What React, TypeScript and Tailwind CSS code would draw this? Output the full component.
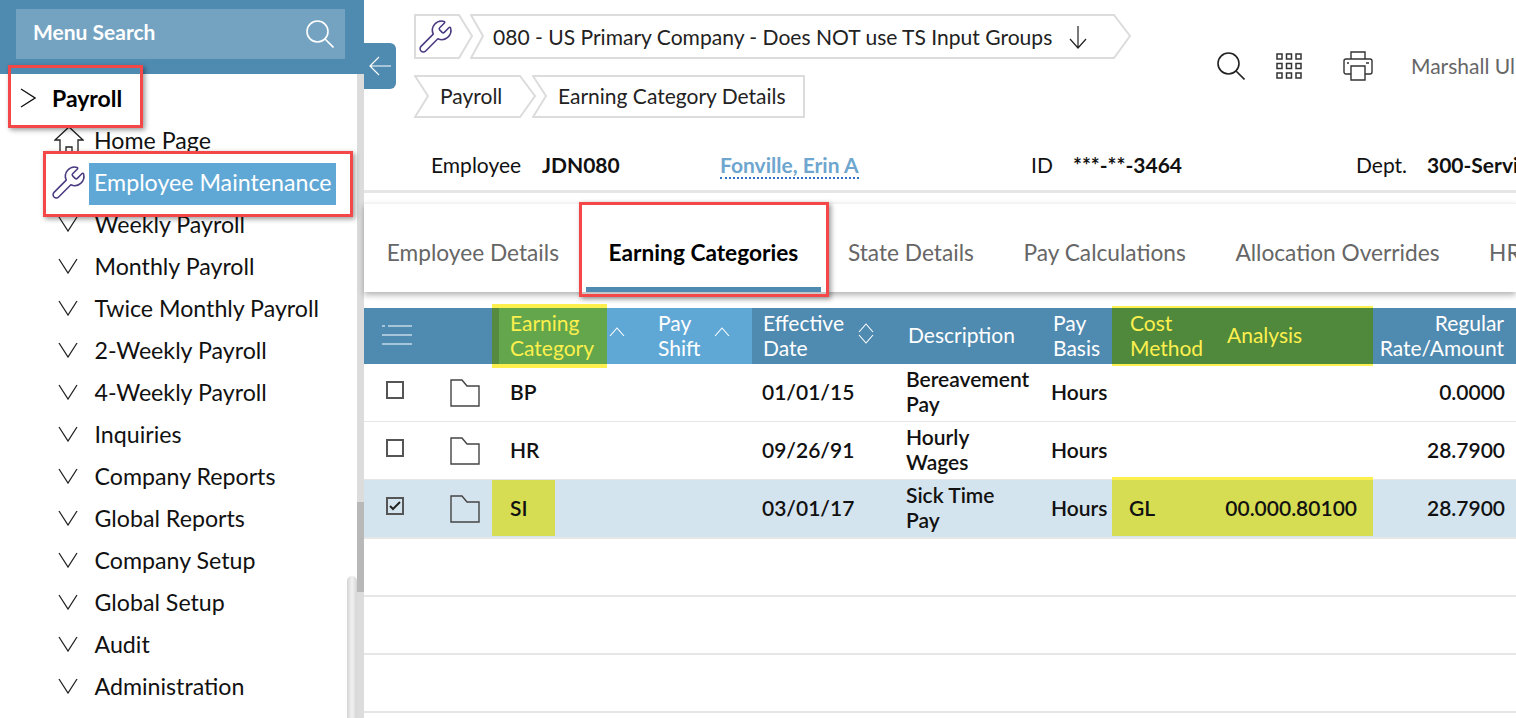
import { Wrench } from "lucide-react";
import type { ReactNode } from "react";

const menuItems = [
  "Weekly Payroll",
  "Monthly Payroll",
  "Twice Monthly Payroll",
  "2-Weekly Payroll",
  "4-Weekly Payroll",
  "Inquiries",
  "Company Reports",
  "Global Reports",
  "Company Setup",
  "Global Setup",
  "Audit",
  "Administration",
];

const tabs = ["Employee Details", "Earning Categories", "State Details", "Pay Calculations", "Allocation Overrides", "HR"];

const rows = [
  { code: "BP", date: "01/01/15", desc: ["Bereavement", "Pay"], rate: "0.0000" },
  { code: "HR", date: "09/26/91", desc: ["Hourly", "Wages"], rate: "28.7900" },
  { code: "SI", date: "03/01/17", desc: ["Sick Time", "Pay"], rate: "28.7900", selected: true },
];

const gridCols = "grid grid-cols-[128px_115px_145px_143px_145px_72px_103px_158px_143px]";

function SearchGlyph({ className }: { className?: string }) {
  return (
    <svg viewBox="0 0 28 28" fill="none" stroke="currentColor" strokeWidth="1.6" className={className}>
      <circle cx="11.5" cy="11.5" r="10.5" />
      <path d="M19 19l8.5 8.5" />
    </svg>
  );
}

function Chevron({ dir }: { dir: "down" | "right" }) {
  if (dir === "right") {
    return (
      <svg width="16" height="20" viewBox="0 0 16 20" fill="none" stroke="#111" strokeWidth="1.3" className="shrink-0">
        <path d="M1 1l14 9L1 19" />
      </svg>
    );
  }
  return (
    <svg width="20" height="16" viewBox="0 0 20 16" fill="none" stroke="#222" strokeWidth="1.3" className="shrink-0">
      <path d="M1 1l9 14 9-14" />
    </svg>
  );
}

function Crumb({ w, h, points, children, className }: { w: number; h: number; points: string; children: ReactNode; className?: string }) {
  return (
    <div className={`relative flex items-center shrink-0 ${className ?? ""}`} style={{ width: w, height: h }}>
      <svg width={w} height={h} className="absolute inset-0">
        <polygon points={points} fill="white" stroke="#dcdcdc" strokeWidth="2" />
      </svg>
      <div className="relative flex items-center whitespace-nowrap text-[21px] text-[#222]">{children}</div>
    </div>
  );
}

function SortIcon({ both }: { both?: boolean }) {
  return (
    <svg width="16" height="24" viewBox="0 0 16 24" fill="none" stroke="white" strokeWidth="1.1" className="shrink-0">
      <path d="M1 11l7-8 7 8" />
      {both && <path d="M1 14l7 8 7-8" />}
    </svg>
  );
}

function Folder() {
  return (
    <svg width="30" height="28" viewBox="0 0 30 28" fill="none" stroke="#444" strokeWidth="1.4">
      <path d="M1 1h11l5 6h12v20H1z" />
    </svg>
  );
}

function Sidebar() {
  return (
    <aside className="relative w-[364px] h-[718px] shrink-0 bg-white">
      <div className="h-[74px] bg-[#4f8ab0] pt-[9px] pl-4 pr-[19px]">
        <div className="h-[50px] bg-[#74a3c2] flex items-center justify-between pl-[17px] pr-[11px] text-white">
          <span className="text-[21px] font-bold pb-1">Menu Search</span>
          <SearchGlyph className="w-7 h-7" />
        </div>
      </div>
      <div className="flex items-center h-[45px] pt-[3px] pl-5 gap-4">
        <Chevron dir="right" />
        <span className="text-[23px] font-bold text-black">Payroll</span>
      </div>
      <div className="pl-[58px]">
        <div className="flex items-center h-[42px] -ml-1">
          <svg width="30" height="28" viewBox="0 0 30 28" fill="none" stroke="#222" strokeWidth="1.3" className="shrink-0">
            <path d="M1 14L15 1l14 13h-5v13h-6v-6h-6v6H6V14z" />
          </svg>
          <span className="ml-[10px] text-[23.2px] text-[#111]">Home Page</span>
        </div>
        <div className="flex items-center h-[42px] -ml-[7px]">
          <Wrench className="w-[37px] h-[37px] -ml-px text-[#4b3a80] shrink-0" strokeWidth={1} />
          <span className="relative top-[2px] ml-[2px] w-[247px] h-[42px] pl-[5px] pb-1 flex items-center bg-[#5fa8d6] text-white text-[23.2px] whitespace-nowrap">
            Employee Maintenance
          </span>
        </div>
        {menuItems.map((item) => (
          <div key={item} className="flex items-center h-[42px] gap-[16.5px] whitespace-nowrap">
            <Chevron dir="down" />
            <span className="text-[23.2px] text-[#111]">{item}</span>
          </div>
        ))}
      </div>
      <div className="absolute right-0 top-[74px] bottom-0 w-[7px] bg-[#dcdcdc]">
        <div className="absolute top-[428px] left-0 w-full h-[90px] bg-[#b8b8b8]" />
      </div>
      <div className="absolute right-[7px] top-[576px] bottom-0 w-[10px] rounded-t-full bg-gradient-to-r from-[#d4d4d4] via-[#f2f2f2] to-[#d4d4d4]" />
      <div className="absolute left-2 top-[65px] w-[135px] h-[63px] border-[3px] border-[#f44848] shadow-[2px_2px_5px_rgba(0,0,0,0.4)]" />
      <div className="absolute left-[43px] top-[151px] w-[310px] h-[66px] border-[3px] border-[#f44848] shadow-[2px_2px_5px_rgba(0,0,0,0.4)]" />
    </aside>
  );
}

function TopBar() {
  return (
    <div className="flex h-[124px]">
      <div className="w-[853px] shrink-0 pl-[50px] pt-[14px]">
        <div className="flex">
          <Crumb w={60} h={45} points="1,1 45,1 58,22 45,44 1,44">
            <Wrench className="ml-[3px] w-[37px] h-[37px] text-[#4b3a80]" strokeWidth={1} />
          </Crumb>
          <Crumb w={662} h={45} points="1,1 644,1 660,22 644,44 1,44 13,22" className="-ml-[4px]">
            <span className="ml-[23px] text-[21.05px]">080 - US Primary Company - Does NOT use TS Input Groups</span>
            <svg width="20" height="24" viewBox="0 0 20 24" fill="none" stroke="#222" strokeWidth="1.2" className="ml-4">
              <path d="M10 1v22M2 14l8 9 8-9" />
            </svg>
          </Crumb>
        </div>
        <div className="flex mt-4">
          <Crumb w={123} h={43} points="1,1 106,1 121,21 106,42 1,42 14,21">
            <span className="ml-[26px] pb-[2px]">Payroll</span>
          </Crumb>
          <Crumb w={274} h={43} points="1,1 272,1 272,42 1,42 14,21" className="-ml-[5px]">
            <span className="ml-[26px] pb-[2px]">Earning Category Details</span>
          </Crumb>
        </div>
      </div>
      <div className="flex items-center h-[30px] mt-[51px] whitespace-nowrap">
        <SearchGlyph className="w-7 h-7 text-[#222]" />
        <svg width="26" height="26" viewBox="0 0 26 26" fill="none" stroke="#333" strokeWidth="1.5" className="ml-[31px]">
          {[1, 10.5, 20].map((y) =>
            [1, 10.5, 20].map((x) => <rect key={`${x}-${y}`} x={x} y={y} width="5" height="5" />)
          )}
        </svg>
        <svg width="30" height="30" viewBox="0 0 30 30" fill="none" stroke="#333" strokeWidth="1.4" className="ml-[41px]">
          <path d="M8 8V1h14v7M8 23H3a2 2 0 0 1-2-2V10a2 2 0 0 1 2-2h24a2 2 0 0 1 2 2v11a2 2 0 0 1-2 2h-5" />
          <path d="M8 15h14v14H8zM4 12h2M23 12h3" />
        </svg>
        <span className="ml-[38px] text-[21px] text-[#666]">Marshall Ulrich</span>
      </div>
    </div>
  );
}

function EmployeeInfo() {
  return (
    <div className="flex items-center h-[42px] mt-5 pl-[67px] text-[21px] text-[#111] whitespace-nowrap">
      <span className="w-[111px] shrink-0">Employee</span>
      <span className="w-[178px] shrink-0 font-bold">JDN080</span>
      <span className="w-[311px] shrink-0">
        <span className="font-bold text-[#6ea6cf] border-b-2 border-dotted border-[#2f74c0]">Fonville, Erin A</span>
      </span>
      <span className="w-[42px] shrink-0">ID</span>
      <span className="w-[283px] shrink-0 font-bold">***-**-3464</span>
      <span className="w-[71px] shrink-0">Dept.</span>
      <span className="font-bold">300-Service</span>
    </div>
  );
}

function Tabs() {
  return (
    <div className="relative flex h-[89px] mt-[10px] bg-white shadow-[0_3px_6px_rgba(0,0,0,0.3)] border-t border-[#f2f2f2] whitespace-nowrap">
      <div className="flex -ml-[2px]">
        {tabs.map((tab) => {
          const active = tab === "Earning Categories";
          return (
            <div
              key={tab}
              className={`relative flex items-center px-[24.8px] pt-[10px] text-[22.7px] ${
                active ? "font-bold text-black" : "text-[#666]"
              }`}
            >
              {tab}
              {active && <div className="absolute left-[2px] right-[2px] bottom-0 h-[5px] bg-[#4f8ab0]" />}
            </div>
          );
        })}
      </div>
      <div className="absolute left-[215px] -top-[2px] w-[250px] h-[95px] border-[3px] border-[#f44848] shadow-[2px_2px_5px_rgba(0,0,0,0.4)]" />
    </div>
  );
}

function HeaderCell({ children, className }: { children: ReactNode; className?: string }) {
  return <div className={`relative flex items-center pb-[2px] text-[21px] leading-[25px] ${className ?? ""}`}>{children}</div>;
}

function DataTable() {
  return (
    <div className="mt-4">
      <div className={`${gridCols} h-14 bg-[#4f8ab0] text-white`}>
        <HeaderCell className="pl-[18px]">
          <svg width="30" height="20" viewBox="0 0 30 20" fill="none" stroke="white" strokeWidth="1.2">
            <path d="M0 1h3M6 1h24M0 10h30M0 19h30" />
          </svg>
        </HeaderCell>
        <HeaderCell className="pl-[18px] bg-[#63a64b] text-[#fdf04e]">
          <span>
            Earning
            <br />
            Category
          </span>
          <div className="absolute left-0 top-0 bottom-0 w-[7px] bg-[#558a3f]" />
          <div className="absolute left-0 right-0 -top-1 h-1 bg-[#fdf04e]" />
          <div className="absolute left-0 right-0 -bottom-1 h-1 bg-[#fdf04e]" />
        </HeaderCell>
        <HeaderCell className="bg-[#5fa8d6] pl-[51px]">
          <span>
            Pay
            <br />
            Shift
          </span>
          <div className="absolute left-[2px] top-[17px]"><SortIcon /></div>
          <div className="absolute left-[107px] top-[17px]"><SortIcon /></div>
        </HeaderCell>
        <HeaderCell className="pl-[11px]">
          <span>
            Effective
            <br />
            Date
          </span>
          <div className="absolute left-[106px] top-[13px]"><SortIcon both /></div>
        </HeaderCell>
        <HeaderCell className="pl-[13px]">
          <span className="relative -top-px">Description</span>
        </HeaderCell>
        <HeaderCell className="pl-[13px]">
          <span>
            Pay
            <br />
            Basis
          </span>
        </HeaderCell>
        <HeaderCell className="pl-[18px] bg-[#50883c] text-[#fdf04e]">
          <span>
            Cost
            <br />
            Method
          </span>
          <div className="absolute left-0 right-0 -top-0.5 h-0.5 bg-[#fdf04e]" />
          <div className="absolute left-0 right-0 -bottom-0.5 h-0.5 bg-[#fdf04e]" />
        </HeaderCell>
        <HeaderCell className="pl-3 bg-[#50883c] text-[#fdf04e]">
          <span className="relative -top-px">Analysis</span>
          <div className="absolute left-0 right-0 -top-0.5 h-0.5 bg-[#fdf04e]" />
          <div className="absolute left-0 right-0 -bottom-0.5 h-0.5 bg-[#fdf04e]" />
        </HeaderCell>
        <HeaderCell className="justify-end text-right pr-3">
          <span>
            Regular
            <br />
            Rate/Amount
          </span>
        </HeaderCell>
      </div>
      {rows.map((row) => (
        <div
          key={row.code}
          className={`${gridCols} h-[58px] pb-px border-b border-[#e6e6e6] shadow-[0_1px_0_#e6e6e6] text-[21px] font-semibold text-[#111] ${
            row.selected ? "bg-[#d4e4ee]" : "bg-white"
          }`}
        >
          <div className="relative flex items-center pl-[22px]">
            <div className="flex items-center justify-center w-[18px] h-[18px] border-2 border-[#555] -mt-[5px]">
              {row.selected && (
                <svg width="12" height="12" viewBox="0 0 12 12" fill="none" stroke="#222" strokeWidth="2">
                  <path d="M1 6l3 3 7-7" />
                </svg>
              )}
            </div>
            <div className="absolute left-[86px] top-[15px]"><Folder /></div>
          </div>
          <div className={`pl-[18px] flex items-center ${row.selected ? "w-[63px] bg-[#d6dd52]" : ""}`}>{row.code}</div>
          <div />
          <div className="pl-[10px] flex items-center">{row.date}</div>
          <div className="pl-[11px] pb-[2px] flex flex-col justify-center leading-[25px] whitespace-nowrap">
            <span>{row.desc[0]}</span>
            <span>{row.desc[1]}</span>
          </div>
          <div className="pl-[11px] flex items-center">Hours</div>
          <div className={`relative pl-[17px] flex items-center ${row.selected ? "bg-[#d6dd52]" : ""}`}>
            {row.selected && "GL"}
            {row.selected && <div className="absolute left-0 right-0 -top-[3px] h-[3px] bg-[#fdf04e]" />}
          </div>
          <div className={`relative pr-4 flex items-center justify-end ${row.selected ? "bg-[#d6dd52]" : ""}`}>
            {row.selected && "00.000.80100"}
            {row.selected && <div className="absolute left-0 right-0 -top-[3px] h-[3px] bg-[#fdf04e]" />}
          </div>
          <div className="pr-[11px] flex items-center justify-end">{row.rate}</div>
        </div>
      ))}
      {[0, 1, 2].map((i) => (
        <div key={i} className="h-[58px] border-b border-[#e6e6e6] shadow-[0_1px_0_#e6e6e6]" />
      ))}
    </div>
  );
}

export default function App() {
  return (
    <div className="relative flex w-[1516px] h-[718px] overflow-hidden bg-white font-['Lato',sans-serif]">
      <Sidebar />
      <main className="relative w-[1152px] shrink-0">
        <TopBar />
        <EmployeeInfo />
        <div className="h-[3px] mt-1 bg-[#e6e6e6]" />
        <Tabs />
        <DataTable />
        <button className="absolute left-0 top-[43px] w-8 h-[46px] bg-[#4f8ab0] rounded-r-md flex items-center justify-center">
          <svg width="22" height="20" viewBox="0 0 22 20" fill="none" stroke="white" strokeWidth="1.2">
            <path d="M22 10H1M10 1l-9 9 9 9" />
          </svg>
        </button>
      </main>
    </div>
  );
}
